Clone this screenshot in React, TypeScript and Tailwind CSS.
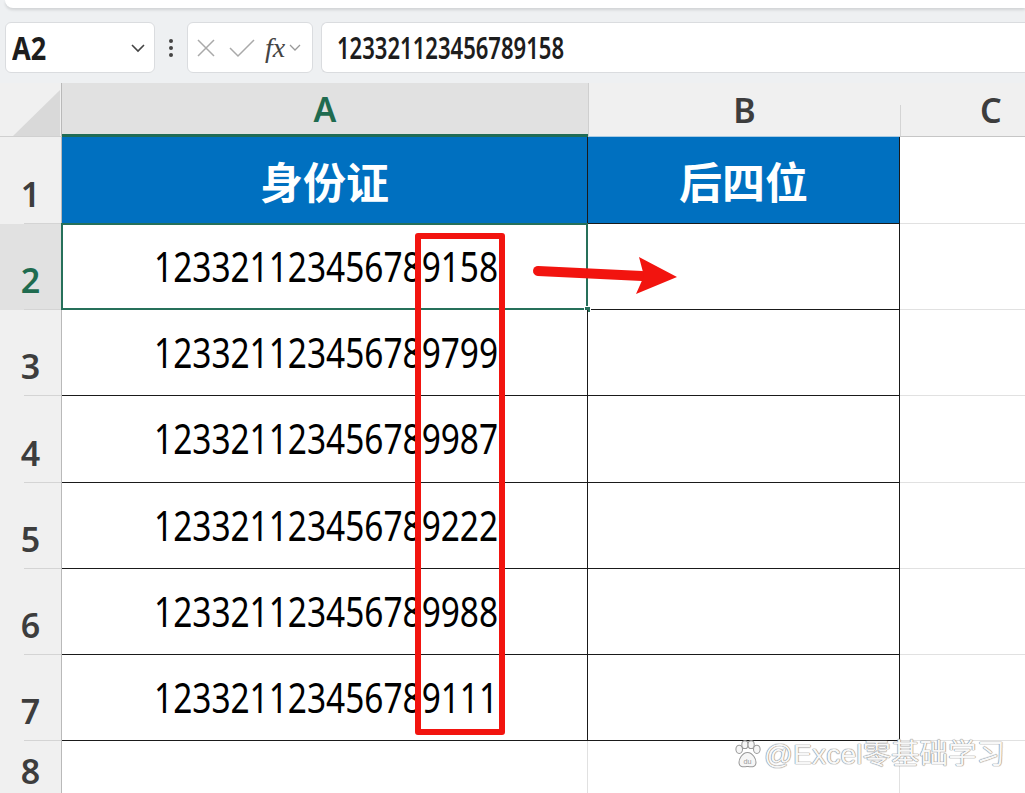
import React from "react";

const ROWS = [
  "123321123456789158",
  "123321123456789799",
  "123321123456789987",
  "123321123456789222",
  "123321123456789988",
  "123321123456789111",
];

const FONT = { fontFamily: '"Noto Sans", "Noto Sans CJK SC", sans-serif' };

function RowHead({ n, selected }: { n: number; selected?: boolean }) {
  return (
    <div
      className={`relative w-[62px] shrink-0 flex items-end justify-center pb-[13px] border-r border-[#b9b9b9] ${
        selected ? "bg-[#e1e1e1] text-[#1f6b4f]" : "bg-[#f0f0f0] text-[#3d3d3d]"
      }`}
    >
      <span className="text-[34px] leading-none font-semibold">{n}</span>
      <div className="absolute bottom-0 left-[24px] right-0 h-px bg-[#d4d4d4]" />
    </div>
  );
}

function Num({ v }: { v: string }) {
  return (
    <span className="inline-block text-[41px] leading-none text-black scale-x-[0.815] origin-center translate-x-[2px]">
      {v}
    </span>
  );
}

export default function App() {
  return (
    <div
      className="relative w-[1025px] h-[793px] overflow-hidden bg-[#eef0f2]"
      style={FONT}
    >
      {/* top ribbon remnant */}
      <div className="ml-[5px] h-[8px] bg-white rounded-bl-[10px] shadow-[0_2px_3px_rgba(0,0,0,0.12)]" />

      {/* formula bar */}
      <div className="mt-[14px] h-[51px] flex items-stretch">
        <div className="ml-[5px] w-[150px] bg-white border border-[#dadcdf] rounded-[6px] flex items-center pl-[6px] pr-[8px]">
          <span className="inline-block text-[33px] font-bold leading-none text-[#1d1d1d] scale-x-[0.82] origin-left">
            A2
          </span>
          <svg className="ml-auto" width="16" height="10" viewBox="0 0 16 10">
            <path d="M2 2 L8 8 L14 2" fill="none" stroke="#444" strokeWidth="1.6" />
          </svg>
        </div>
        <div className="w-[32px] flex flex-col items-center justify-center gap-[3px]">
          <div className="w-[4px] h-[4px] rounded-full bg-[#444]" />
          <div className="w-[4px] h-[4px] rounded-full bg-[#444]" />
          <div className="w-[4px] h-[4px] rounded-full bg-[#444]" />
        </div>
        <div className="w-[126px] bg-white border border-[#dadcdf] rounded-[6px] flex items-center pl-[8px]">
          <svg width="20" height="20" viewBox="0 0 20 20">
            <path d="M2 2 L18 18 M18 2 L2 18" stroke="#a9a9a9" strokeWidth="1.5" />
          </svg>
          <svg className="ml-[13px]" width="26" height="20" viewBox="0 0 26 20">
            <path d="M1 10 L9 18 L25 2" fill="none" stroke="#a9a9a9" strokeWidth="1.5" />
          </svg>
          <span
            className="ml-[10px] text-[28px] italic leading-none text-[#444]"
            style={{ fontFamily: '"Liberation Serif", serif' }}
          >
            fx
          </span>
          <svg className="ml-[4px]" width="12" height="8" viewBox="0 0 12 8">
            <path d="M1 1 L6 6 L11 1" fill="none" stroke="#999" strokeWidth="1.3" />
          </svg>
        </div>
        <div className="ml-[8px] flex-1 bg-white border border-[#dadcdf] border-r-0 rounded-l-[6px] flex items-center pl-[15px]">
          <span className="inline-block text-[30px] font-semibold leading-none text-[#1d1d1d] scale-x-[0.735] origin-left">
            123321123456789158
          </span>
        </div>
      </div>

      {/* grid */}
      <div className="mt-[10px]">
        {/* column headers */}
        <div className="flex h-[54px]">
          <div className="relative w-[62px] shrink-0 bg-[#f0f0f0] border-r border-[#b9b9b9] border-b border-b-[#d0d0d0]">
            <svg className="absolute left-[13px] top-[7px]" width="47" height="46" viewBox="0 0 47 46">
              <polygon points="47,0 47,46 0,46" fill="#d9d9d9" />
            </svg>
          </div>
          <div className="w-[526px] shrink-0 bg-[#e1e1e1] border-b-[3px] border-[#1f6b55] flex items-center justify-center">
            <span className="text-[34px] font-semibold leading-none text-[#1f6b4f]">A</span>
          </div>
          <div className="w-[312px] shrink-0 bg-[#f0f0f0] border-l border-[#cfcfcf] border-b border-b-[#a9cbe3] flex items-center justify-center">
            <span className="text-[34px] font-semibold leading-none text-[#3d3d3d]">B</span>
          </div>
          <div className="relative flex-1 bg-[#f0f0f0] border-b border-[#c6c6c6] flex items-center pl-[80px]">
            <div className="absolute left-0 top-[22px] bottom-0 w-px bg-[#d4d4d4]" />
            <span className="text-[34px] font-semibold leading-none text-[#3d3d3d]">C</span>
          </div>
        </div>

        {/* row 1 */}
        <div className="flex h-[87px]">
          <RowHead n={1} />
          <div className="w-[526px] shrink-0 bg-[#0070c0] border-r border-b border-[#1a1a1a] flex items-center justify-center">
            <span className="text-[43px] font-bold text-white leading-none" style={{ fontFamily: '"Noto Sans CJK SC", sans-serif' }}>
              身份证
            </span>
          </div>
          <div className="w-[312px] shrink-0 bg-[#0070c0] border-r border-b border-[#1a1a1a] flex items-center justify-center">
            <span className="text-[43px] font-bold text-white leading-none" style={{ fontFamily: '"Noto Sans CJK SC", sans-serif' }}>
              后四位
            </span>
          </div>
          <div className="flex-1 bg-white border-b border-[#e1e1e1]" />
        </div>

        {ROWS.map((v, i) => (
          <div key={v} className="flex h-[86.2px]">
            <RowHead n={i + 2} selected={i === 0} />
            <div className="relative w-[526px] shrink-0 bg-white border-r border-b border-[#1a1a1a] flex items-center justify-center">
              <Num v={v} />
              {i === 0 && (
                <>
                  <div className="absolute -left-px -top-px right-[-1px] bottom-[-1px] border-2 border-[#26705a]" />
                  <div className="absolute right-[-4px] bottom-[-4px] w-[7px] h-[7px] bg-[#26705a] border border-white" />
                </>
              )}
            </div>
            <div className="w-[312px] shrink-0 bg-white border-r border-b border-[#1a1a1a]" />
            <div className="flex-1 bg-white border-b border-[#e1e1e1]" />
          </div>
        ))}

        {/* row 8 */}
        <div className="flex h-[60px]">
          <RowHead n={8} />
          <div className="w-[526px] shrink-0 bg-white border-r border-[#e1e1e1]" />
          <div className="w-[312px] shrink-0 bg-white border-r border-[#e1e1e1]" />
          <div className="flex-1 bg-white" />
        </div>
      </div>

      {/* red highlight box */}
      <div className="absolute left-[415px] top-[233px] w-[90px] h-[502px] border-[6px] border-[#f2140f] rounded-[3px]" />

      {/* red arrow */}
      <svg className="absolute left-[530px] top-[250px]" width="155" height="50" viewBox="0 0 155 50">
        <path d="M8 21 L112 26" stroke="#f2140f" strokeWidth="10" strokeLinecap="round" />
        <polygon points="109,7 147,27 106,44 114,26" fill="#f2140f" />
      </svg>

      {/* watermark */}
      <div className="absolute left-[734px] top-[740px] flex items-center gap-[3px]">
        <svg width="27" height="29" viewBox="0 0 26 28">
          <g fill="#f6f6f6" stroke="#9a9a9a" strokeWidth="1">
            <ellipse cx="5" cy="9" rx="3.2" ry="4" />
            <ellipse cx="10.5" cy="4.5" rx="3" ry="3.8" />
            <ellipse cx="16.5" cy="4.5" rx="3" ry="3.8" />
            <ellipse cx="22" cy="9" rx="3.2" ry="4" />
            <path d="M13 12 C8 12 4 19 5 23 C6 27 10 26 13 25.5 C16 26 20 27 21 23 C22 19 18 12 13 12 Z" />
          </g>
          <text x="13" y="23" textAnchor="middle" fontSize="7" fill="#9a9a9a" style={{ fontFamily: '"Liberation Sans", sans-serif' }}>du</text>
        </svg>
        <span
          className="text-[28.5px] leading-none text-[#f7f7f7] [text-shadow:0_0_1px_#8a8a8a,0_0_1px_#8a8a8a,0_0_1px_#8a8a8a]"
          style={{ fontFamily: '"Liberation Sans", "Noto Sans CJK SC", sans-serif' }}
        >
          @Excel零基础学习
        </span>
      </div>
    </div>
  );
}
